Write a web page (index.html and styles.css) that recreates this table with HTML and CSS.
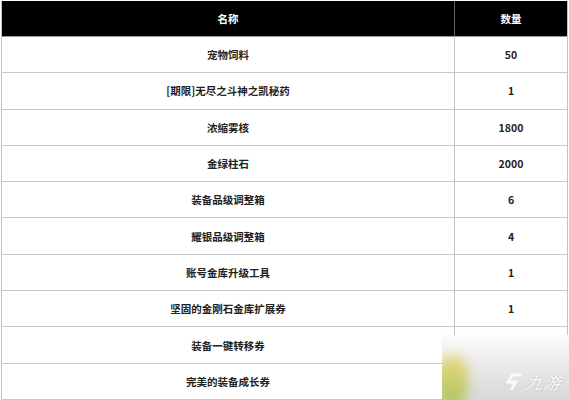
FILE: index.html
```html
<!DOCTYPE html>
<html lang="zh-CN">
<head>
<meta charset="utf-8">
<link rel="stylesheet" href="styles.css">
</head>
<body>
<div class="page">
  <div class="table">
    <div class="row head"><div class="c name">名称</div><div class="c num">数量</div></div>
    <div class="row"><div class="c name">宠物饲料</div><div class="c num">50</div></div>
    <div class="row"><div class="c name">[期限]无尽之斗神之凯秘药</div><div class="c num">1</div></div>
    <div class="row"><div class="c name">浓缩雾核</div><div class="c num">1800</div></div>
    <div class="row"><div class="c name">金绿柱石</div><div class="c num">2000</div></div>
    <div class="row"><div class="c name">装备品级调整箱</div><div class="c num">6</div></div>
    <div class="row"><div class="c name">耀银品级调整箱</div><div class="c num">4</div></div>
    <div class="row"><div class="c name">账号金库升级工具</div><div class="c num">1</div></div>
    <div class="row"><div class="c name">坚固的金刚石金库扩展券</div><div class="c num">1</div></div>
    <div class="row"><div class="c name">装备一键转移券</div><div class="c num">1</div></div>
    <div class="row"><div class="c name">完美的装备成长券</div><div class="c num">1</div></div>
  </div>
  <div class="watermark">
    <div class="blob"></div>
    <div class="brand">
      <svg class="logo" width="20" height="20" viewBox="0 0 20 20">
        <path d="M16 3 H7 L4 10 H12 L9 18" fill="none" stroke="#fafafa" stroke-width="3" stroke-linejoin="miter"/>
      </svg>
      <span class="brand-text">九游</span>
    </div>
  </div>
</div>
</body>
</html>
```
FILE: styles.css
```css
html, body {
  margin: 0;
  padding: 0;
  background: #fff;
}
.page {
  position: relative;
  width: 569px;
  height: 400px;
  overflow: hidden;
  padding: 1px 0 0 1px;
  box-sizing: border-box;
}
.table {
  width: 567px;
  border-left: 1px solid #c4c4c4;
  border-right: 1px solid #c4c4c4;
  box-sizing: border-box;
  font-family: "Noto Sans CJK SC", "Noto Sans", sans-serif;
  font-weight: 700;
  font-size: 10.5px;
  color: #222;
}
.row {
  display: grid;
  grid-template-columns: 452px 1fr;
  height: 36.3px;
  border-bottom: 1px solid #c8c8c8;
  box-sizing: border-box;
}
.row.head {
  height: 36px;
  background: #000;
  color: #fff;
  border-bottom-color: #9a9a9a;
}
.c {
  display: flex;
  align-items: center;
  justify-content: center;
}
.num {
  border-left: 1px solid #c4c4c4;
}
.head .num {
  border-left-color: #666;
}
.watermark {
  position: absolute;
  left: 442px;
  top: 335px;
  width: 127px;
  height: 65px;
  overflow: hidden;
  background: linear-gradient(to bottom, #fbfbfb 0%, #ececec 40%, #d8d8d8 100%);
}
.blob {
  position: absolute;
  left: -6px;
  top: 20px;
  width: 32px;
  height: 52px;
  border-radius: 40%;
  background: linear-gradient(to bottom, #e8d878 0%, #cccc58 40%, #a4c050 100%);
  filter: blur(6px);
  opacity: 0.85;
}
.brand {
  position: absolute;
  left: 62px;
  top: 34px;
  display: flex;
  align-items: center;
  gap: 2px;
}
.logo {
  transform: skewX(-12deg);
}
.brand-text {
  font-family: "Noto Sans CJK SC", sans-serif;
  font-size: 17px;
  font-weight: 400;
  font-style: italic;
  color: #fafafa;
  letter-spacing: 1px;
  transform: skewX(-12deg);
  display: inline-block;
  text-shadow: 0 0 2px rgba(150,150,150,0.6);
}
```
